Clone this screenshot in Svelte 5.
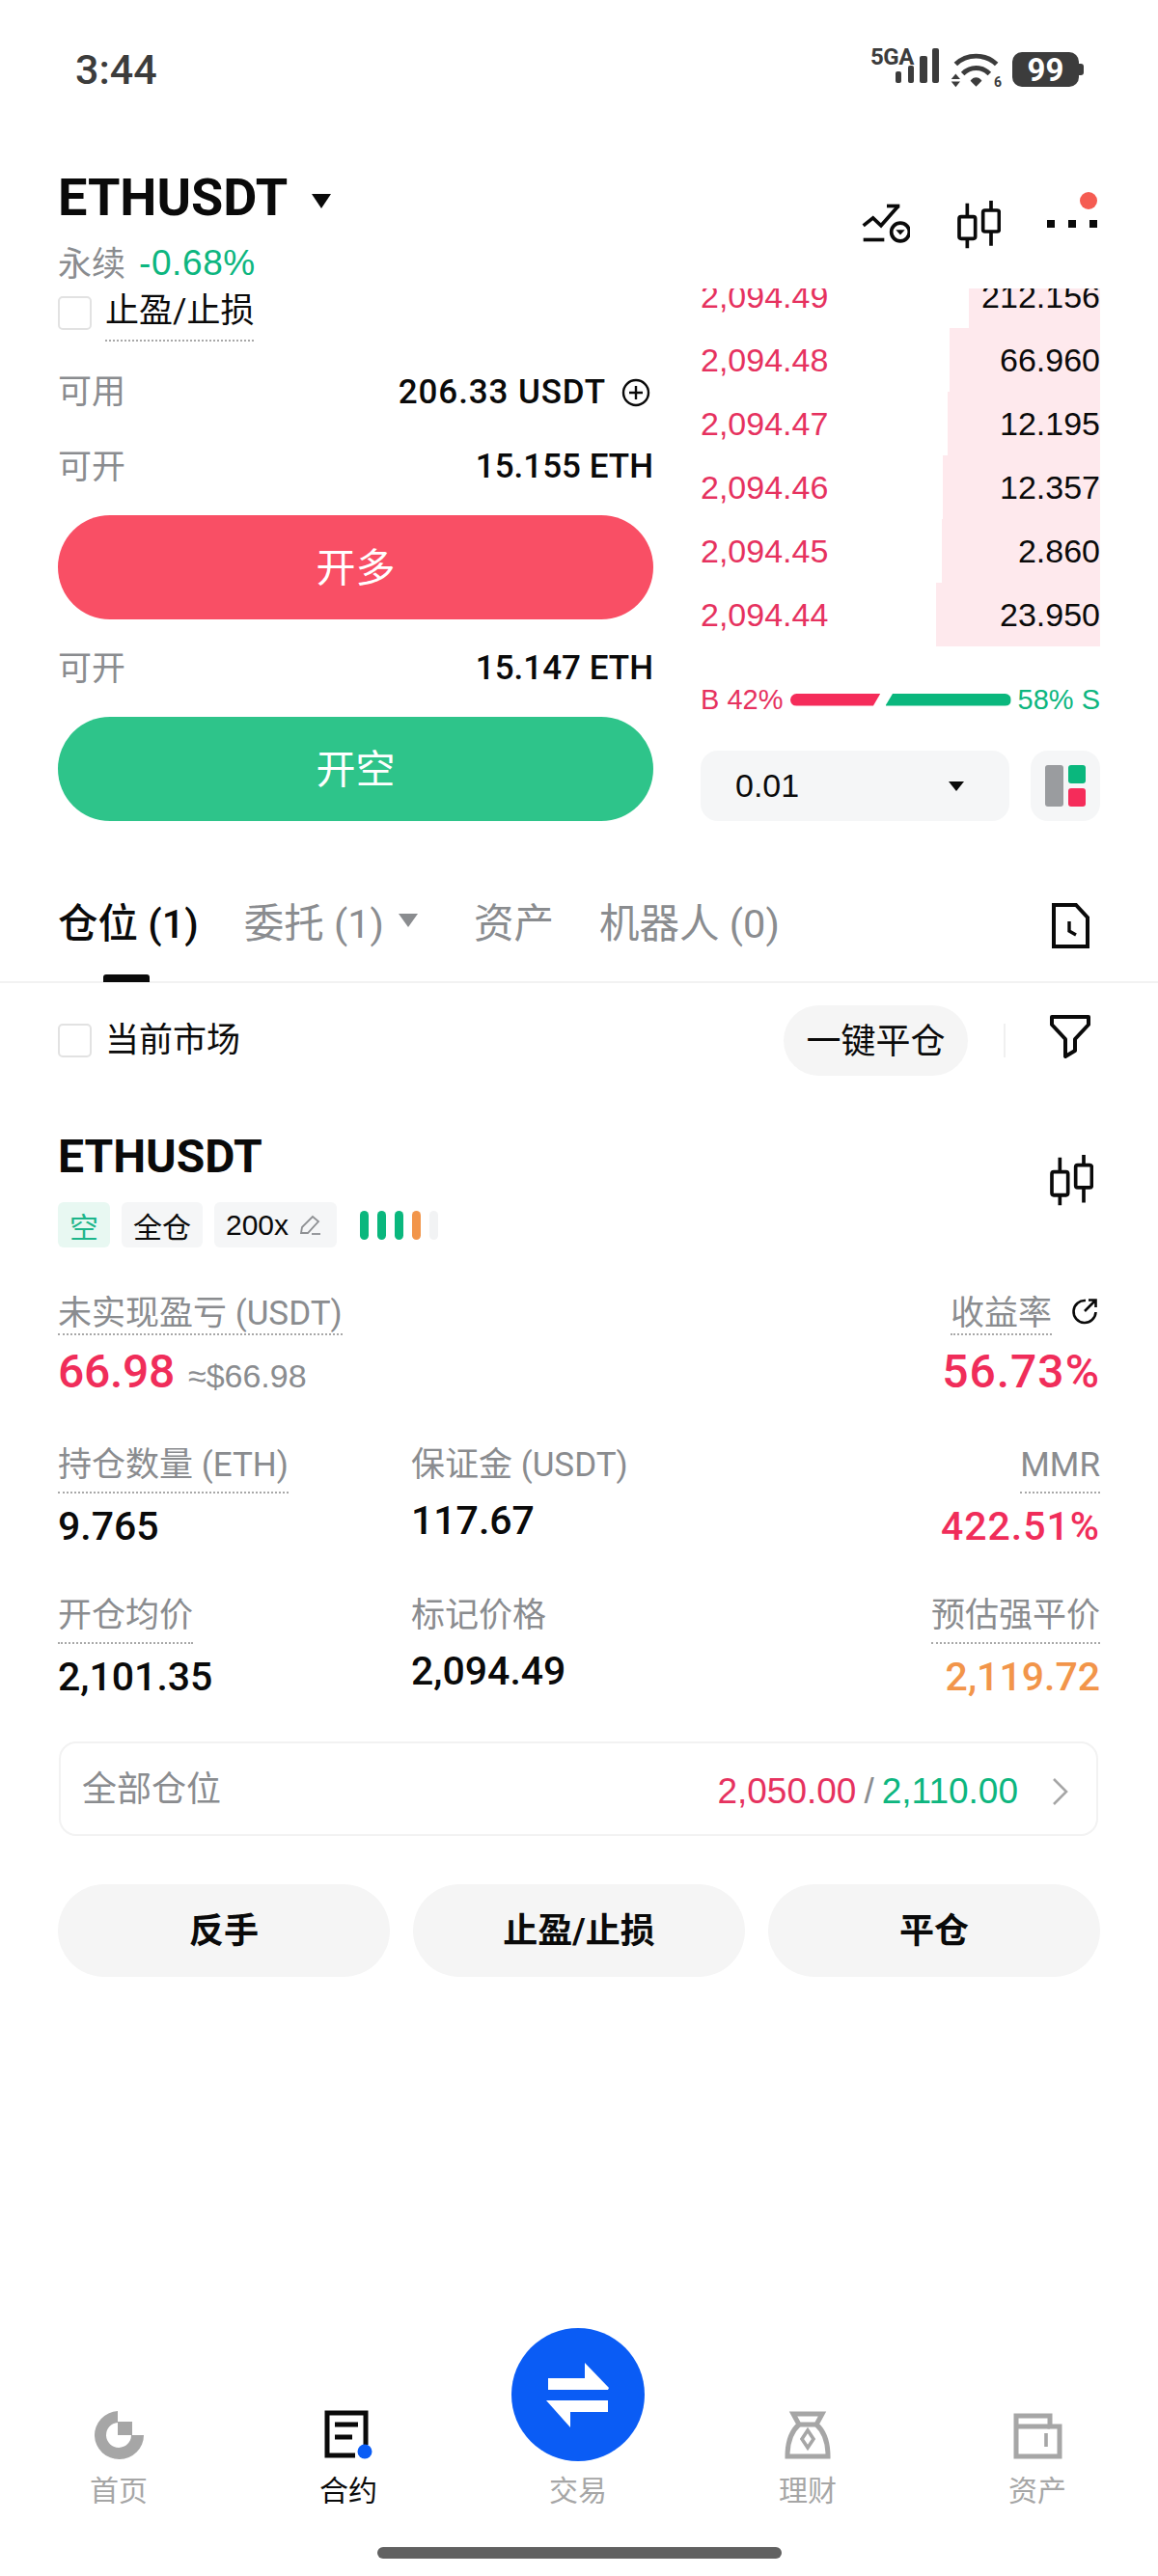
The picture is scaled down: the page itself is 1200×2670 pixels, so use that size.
<script>
	const book = [
		{ price: '2,094.49', qty: '212.156', width: 136 },
		{ price: '2,094.48', qty: '66.960', width: 156 },
		{ price: '2,094.47', qty: '12.195', width: 158 },
		{ price: '2,094.46', qty: '12.357', width: 163 },
		{ price: '2,094.45', qty: '2.860', width: 164 },
		{ price: '2,094.44', qty: '23.950', width: 170 }
	];
	const tabs = ['首页', '合约', '交易', '理财', '资产'];
</script>

<div class="page">
	<div class="status">
		<span class="time">3:44</span>
		<div class="status-icons">
			<div class="signal">
				<span class="net">5GA</span>
				<svg viewBox="0 0 70 40" width="70" height="40">
					<rect x="24" y="24" width="6" height="12" rx="2" />
					<rect x="37" y="18" width="6" height="18" rx="2" />
					<rect x="49" y="8" width="8" height="28" rx="2" />
					<rect x="62" y="0" width="7" height="36" rx="2" />
				</svg>
			</div>
			<div class="wifi">
				<svg viewBox="0 0 160 112" width="53" height="37">
					<path d="M16 38 C50 4 110 4 144 38" fill="none" stroke="#3c3c3c" stroke-width="15" />
					<path d="M38 68 C62 44 98 44 122 68" fill="none" stroke="#3c3c3c" stroke-width="15" />
					<path d="M62 90 C72 76 88 76 98 90 L80 108 Z" fill="#3c3c3c" />
					<path d="M2 85 L16 68 L30 85 Z M2 92 L30 92 L16 110 Z" fill="#3c3c3c" />
				</svg>
				<span class="wifi-six">6</span>
			</div>
			<div class="battery"><span>99</span></div>
		</div>
	</div>

	<div class="header">
		<div class="symbol">
			<div class="pair">
				<h1>ETHUSDT</h1>
				<span class="caret"></span>
			</div>
			<div class="sub"><span class="perp">永续</span><span class="green">-0.68%</span></div>
		</div>
		<div class="tools">
			<svg width="50" height="42" viewBox="0 0 150 125" fill="none" stroke="#0a0a0a" stroke-width="11">
				<path d="M5 68 L35 44 L60 68 L113 8" />
				<path d="M78 7 H118" />
				<path d="M5 112 H70" />
				<circle cx="120" cy="88" r="28" />
				<path d="M106 81 H134 L120 97 Z" fill="#0a0a0a" stroke="none" />
			</svg>
			<svg class="candle" width="45" height="50" viewBox="0 0 135 150" fill="none" stroke="#0a0a0a" stroke-width="11">
				<rect x="6" y="50" width="50" height="68" rx="6" />
				<path d="M31 8 V50 M31 118 V148" />
				<rect x="80" y="30" width="50" height="66" rx="6" />
				<path d="M105 0 V30 M105 96 V140" />
			</svg>
			<div class="more">
				<i></i><i></i><i></i>
				<b class="badge"></b>
			</div>
		</div>
	</div>

	<div class="trade">
		<div class="form">
			<div class="tp">
				<span class="check"></span>
				<span class="tp-label">止盈/止损</span>
			</div>
			<div class="line first">
				<span class="muted">可用</span>
				<span class="val avail">206.33 USDT
					<svg width="30" height="30" viewBox="0 0 30 30" fill="none" stroke="#0a0a0a" stroke-width="2.4">
						<circle cx="15" cy="15" r="13" />
						<path d="M8 15 H22 M15 8 V22" />
					</svg>
				</span>
			</div>
			<div class="line second">
				<span class="muted">可开</span>
				<span class="val">15.155 ETH</span>
			</div>
			<button class="cta long">开多</button>
			<div class="line third">
				<span class="muted">可开</span>
				<span class="val">15.147 ETH</span>
			</div>
			<button class="cta short">开空</button>
		</div>

		<div class="side">
			<div class="book">
				{#each book as row}
					<div class="book-row">
						<div class="depth" style="width: {row.width}px"></div>
						<span class="price">{row.price}</span>
						<span class="qty">{row.qty}</span>
					</div>
				{/each}
			</div>
			<div class="ratio">
				<span class="red">B 42%</span>
				<div class="ratio-bars">
					<div class="bar-buy"></div>
					<div class="bar-sell"></div>
				</div>
				<span class="green">58% S</span>
			</div>
			<div class="controls">
				<div class="select">
					<span>0.01</span>
					<span class="select-caret"></span>
				</div>
				<div class="layout-btn">
					<div class="lay-gray"></div>
					<div class="lay-col">
						<div class="lay-green"></div>
						<div class="lay-red"></div>
					</div>
				</div>
			</div>
		</div>
	</div>

	<div class="tabs">
		<div class="tab active">仓位 (1)<span class="underline"></span></div>
		<div class="tab">委托 (1)<span class="tab-caret"></span></div>
		<div class="tab">资产</div>
		<div class="tab">机器人 (0)</div>
		<svg class="doc" width="41" height="47" viewBox="0 0 41 47" fill="none" stroke="#0a0a0a" stroke-width="4">
			<path d="M3 2 H26 L38 15 V45 H3 Z" />
			<path d="M19 19 V29 L26 33" stroke-width="3.4" />
		</svg>
	</div>

	<div class="filter">
		<span class="check"></span>
		<span class="filter-label">当前市场</span>
		<button class="pill">一键平仓</button>
		<span class="divider"></span>
		<svg width="42" height="46" viewBox="0 0 42 46" fill="none" stroke="#0a0a0a" stroke-width="4" stroke-linejoin="round">
			<path d="M2 3 H40 V11 L26 26 V38 L16 44 V26 L2 11 Z" />
		</svg>
	</div>

	<div class="position">
		<div class="pos-head">
			<div>
				<h2>ETHUSDT</h2>
				<div class="tags">
					<span class="tag side-tag">空</span>
					<span class="tag">全仓</span>
					<span class="tag lever">200x
						<svg width="23" height="23" viewBox="0 0 23 23" fill="none" stroke="#8e9093" stroke-width="1.8">
							<path d="M2 20 L3 14 L14 3 L20 8 L9 20 Z" />
							<path d="M13 21 H22" />
						</svg>
					</span>
					<div class="ticks">
						<i></i><i></i><i></i><i class="warn"></i><i class="off"></i>
					</div>
				</div>
			</div>
			<svg class="pos-candle" width="45" height="53" viewBox="0 0 135 150" fill="none" stroke="#0a0a0a" stroke-width="11" preserveAspectRatio="none">
				<rect x="6" y="50" width="50" height="68" rx="6" />
				<path d="M31 8 V50 M31 118 V148" />
				<rect x="80" y="30" width="50" height="66" rx="6" />
				<path d="M105 0 V30 M105 96 V140" />
			</svg>
		</div>

		<div class="metrics">
			<div class="cell wide">
				<span class="label dotted tight">未实现盈亏 (USDT)</span>
				<div class="pnl"><span class="big red-strong">66.98</span><span class="approx">≈$66.98</span></div>
			</div>
			<div class="cell end">
				<div class="label-wrap">
					<span class="label dotted tight">收益率</span>
					<svg class="refresh" width="28" height="28" viewBox="0 0 28 28" fill="none" stroke="#0a0a0a" stroke-width="2.6">
						<path d="M15 3 A11.500 11.500 0 1 0 25.500 15" />
						<path d="M14 14 L25 3 M18 2.500 H25.500 V10" />
					</svg>
				</div>
				<div class="pnl"><span class="big pct red-strong">56.73%</span></div>
			</div>

			<div class="cell">
				<span class="label dotted">持仓数量 (ETH)</span>
				<span class="value">9.765</span>
			</div>
			<div class="cell">
				<span class="label">保证金 (USDT)</span>
				<span class="value plain">117.67</span>
			</div>
			<div class="cell end">
				<span class="label dotted">MMR</span>
				<span class="value pct red-strong">422.51%</span>
			</div>

			<div class="cell">
				<span class="label dotted">开仓均价</span>
				<span class="value">2,101.35</span>
			</div>
			<div class="cell">
				<span class="label">标记价格</span>
				<span class="value plain">2,094.49</span>
			</div>
			<div class="cell end">
				<span class="label dotted">预估强平价</span>
				<span class="value orange">2,119.72</span>
			</div>
		</div>

		<div class="card">
			<span class="muted">全部仓位</span>
			<div class="card-right">
				<span class="red">2,050.00</span>
				<span class="slash">/</span>
				<span class="green">2,110.00</span>
				<svg width="18" height="28" viewBox="0 0 18 28" fill="none" stroke="#a6a6a6" stroke-width="2.6">
					<path d="M2 1 L15 14 L2 27" />
				</svg>
			</div>
		</div>

		<div class="actions">
			<button>反手</button>
			<button>止盈/止损</button>
			<button>平仓</button>
		</div>
	</div>

	<nav class="nav">
		{#each tabs as tab, i}
			<div class="nav-item" class:current={i === 1}>
				{#if i === 0}
					<svg width="51" height="50" viewBox="0 0 51 50" fill="#a6a6a6">
						<path d="M24 0 V12 A13 13 0 1 0 38 25 H51 A25.500 25 0 1 1 24 0 Z" />
						<rect x="24" y="11" width="15" height="14" />
					</svg>
				{:else if i === 1}
					<svg width="50" height="51" viewBox="0 0 50 51" fill="none">
						<path d="M43 36 V3 H3 V47 H32" stroke="#0a0a0a" stroke-width="5" />
						<path d="M11 15 H35 M11 28 H29" stroke="#0a0a0a" stroke-width="5" />
						<circle cx="42" cy="43" r="7.500" fill="#0a5cf5" />
					</svg>
				{:else if i === 2}
					<svg class="swap" width="138" height="138" viewBox="0 0 138 138">
						<circle cx="69" cy="69" r="69" fill="#0a5cf5" />
						<path d="M76 36 L101 62 L100 64 H38 V52 H76 Z M36 75 H100 V87 H61 V103 Z" fill="#ffffff" />
					</svg>
				{:else if i === 3}
					<svg width="48" height="50" viewBox="0 0 48 50" fill="none" stroke="#a6a6a6" stroke-width="5">
						<path d="M9 3 H39 L33 14 H15 Z" />
						<path d="M15 14 C7 21 3 31 3 47 H45 C45 31 41 21 33 14" />
						<path d="M24 20 L30 29 L24 38 L18 29 Z" stroke-width="3.600" />
					</svg>
				{:else}
					<svg width="51" height="48" viewBox="0 0 51 48" fill="none" stroke="#a6a6a6" stroke-width="5">
						<path d="M3 3 H38 V14 H48 V45 H3 Z" />
						<path d="M3 14 H38" />
						<path d="M34 21 V35" stroke-width="3.600" />
					</svg>
				{/if}
				<span>{tab}</span>
			</div>
		{/each}
	</nav>
	<div class="home-bar"></div>
</div>

<style>
	:global(body) {
		background: #ffffff;
	}

	.page {
		--num: "Liberation Sans", "Noto Sans CJK SC", sans-serif;
		width: 1200px;
		height: 2670px;
		display: flex;
		flex-direction: column;
		overflow: hidden;
		color: #0a0a0a;
		font-family: Roboto, "Noto Sans CJK SC", sans-serif;
	}

	h1,
	h2 {
		margin: 0;
	}

	button {
		border: none;
		font-family: inherit;
		padding: 0;
	}

	.red {
		color: #e6325f;
	}

	.red-strong {
		color: #f02d5a;
	}

	.green {
		color: #0db67f;
	}

	.orange {
		color: #f2954a;
	}

	.muted {
		color: #8a8c8f;
	}

	/* status bar */
	.status {
		height: 104px;
		padding: 50px 78px 0 78px;
		box-sizing: border-box;
		display: flex;
		justify-content: space-between;
	}

	.time {
		font-size: 43px;
		line-height: 44px;
		font-weight: 500;
		color: #3c3c3c;
	}

	.status-icons {
		display: flex;
		align-items: flex-start;
		gap: 11px;
	}

	.signal {
		position: relative;
		width: 70px;
		height: 40px;
		fill: #3c3c3c;
	}

	.net {
		position: absolute;
		left: -2px;
		top: -3px;
		font-size: 24px;
		line-height: 24px;
		font-weight: 700;
		letter-spacing: -0.5px;
		color: #3c3c3c;
	}

	.wifi {
		position: relative;
		width: 53px;
		height: 37px;
		margin-top: 4px;
	}

	.wifi-six {
		position: absolute;
		right: 0;
		bottom: -1px;
		font-size: 14px;
		line-height: 14px;
		font-weight: 700;
		color: #3c3c3c;
	}

	.battery {
		position: relative;
		width: 69px;
		height: 36px;
		margin-top: 4px;
		margin-right: 4px;
		border-radius: 10px;
		background: #3c3c3c;
		color: #ffffff;
		display: flex;
		align-items: center;
		justify-content: center;
		font-size: 33px;
		font-weight: 700;
	}

	.battery::after {
		content: "";
		position: absolute;
		right: -5px;
		top: 12px;
		width: 5px;
		height: 12px;
		border-radius: 0 3px 3px 0;
		background: #3c3c3c;
	}

	/* header */
	.header {
		height: 195px;
		padding: 64px 60px 0 60px;
		box-sizing: border-box;
		display: flex;
		justify-content: space-between;
	}

	.pair {
		display: flex;
		align-items: center;
		height: 74px;
	}

	.pair h1 {
		font-size: 54px;
		font-weight: 700;
		line-height: 74px;
	}

	.caret {
		margin-left: 25px;
		margin-top: 7px;
		width: 0;
		height: 0;
		border-left: 10px solid transparent;
		border-right: 10px solid transparent;
		border-top: 15px solid #0a0a0a;
	}

	.sub {
		display: flex;
		align-items: center;
		height: 40px;
		margin-top: 11px;
		font-family: var(--num);
		font-size: 37px;
		letter-spacing: 0.6px;
	}

	.perp {
		font-size: 35px;
		color: #8a8c8f;
		margin-right: 14px;
		margin-bottom: 5px;
		letter-spacing: 0;
	}

	.tools {
		display: flex;
		align-items: flex-start;
		padding-top: 43px;
		margin-right: 3px;
	}

	.candle {
		margin-left: 49px;
		margin-top: -3px;
	}

	.more {
		position: relative;
		display: flex;
		gap: 14px;
		margin-left: 48px;
		margin-top: 17px;
	}

	.more i {
		width: 8px;
		height: 8px;
		background: #0a0a0a;
	}

	.badge {
		position: absolute;
		right: 0;
		top: -29px;
		width: 18px;
		height: 18px;
		border-radius: 50%;
		background: #f55c52;
	}

	/* trade area */
	.trade {
		display: flex;
		padding: 0 60px;
		gap: 49px;
	}

	.form {
		width: 617px;
	}

	.tp {
		display: flex;
		align-items: flex-start;
		padding-top: 8px;
		gap: 14px;
	}

	.check {
		display: block;
		width: 35px;
		height: 35px;
		box-sizing: border-box;
		border: 2px solid #e2e2e2;
		border-radius: 5px;
		flex-shrink: 0;
	}

	.tp-label {
		font-size: 35px;
		line-height: 32px;
		padding-bottom: 13px;
		border-bottom: 2px dotted #a8a8a8;
	}

	.line {
		display: flex;
		justify-content: space-between;
		align-items: center;
		height: 40px;
		font-size: 35px;
	}

	.line .muted {
		margin-bottom: 6px;
	}

	.line.first {
		margin-top: 31px;
	}

	.line.second {
		margin-top: 38px;
	}

	.line.third {
		margin-top: 30px;
	}

	.val {
		display: flex;
		align-items: center;
		gap: 16px;
		font-size: 35px;
		font-weight: 500;
		white-space: pre-line;
	}

	.val.avail {
		letter-spacing: 0.9px;
		margin-top: 3px;
	}

	.val svg {
		margin-right: 3px;
	}

	.cta {
		display: block;
		width: 100%;
		height: 108px;
		margin-top: 31px;
		padding-bottom: 6px;
		border-radius: 54px;
		color: #ffffff;
		font-size: 41px;
	}

	.long {
		background: #f94f65;
	}

	.short {
		background: #2ec48a;
	}

	.side {
		width: 414px;
	}

	.book {
		height: 371px;
		overflow: hidden;
		display: flex;
		flex-direction: column;
		justify-content: flex-end;
	}

	.book-row {
		position: relative;
		flex-shrink: 0;
		height: 66px;
		display: flex;
		align-items: center;
		justify-content: space-between;
		font-family: var(--num);
		font-size: 34px;
	}

	.depth {
		position: absolute;
		right: 0;
		top: 0;
		bottom: 0;
		background: #fee9ed;
	}

	.price {
		position: relative;
		color: #e6325f;
	}

	.qty {
		position: relative;
	}

	.ratio {
		display: flex;
		align-items: center;
		justify-content: space-between;
		height: 30px;
		margin-top: 40px;
		font-family: var(--num);
		font-size: 29px;
	}

	.ratio-bars {
		display: flex;
		gap: 5px;
		height: 13px;
	}

	.bar-buy {
		width: 94px;
		background: #f52c5a;
		border-radius: 7px 0 0 7px;
		clip-path: polygon(0 0, 100% 0, 92% 100%, 0 100%);
	}

	.bar-sell {
		width: 130px;
		background: #0ab77d;
		border-radius: 0 7px 7px 0;
		clip-path: polygon(6% 0, 100% 0, 100% 100%, 0 100%);
	}

	.controls {
		display: flex;
		justify-content: space-between;
		margin-top: 38px;
	}

	.select {
		width: 320px;
		height: 73px;
		padding: 0 47px 0 36px;
		box-sizing: border-box;
		border-radius: 18px;
		background: #f5f6f7;
		display: flex;
		align-items: center;
		justify-content: space-between;
		font-family: var(--num);
		font-size: 34px;
	}

	.select-caret {
		width: 0;
		height: 0;
		border-left: 8px solid transparent;
		border-right: 8px solid transparent;
		border-top: 10px solid #0a0a0a;
	}

	.layout-btn {
		width: 72px;
		height: 73px;
		border-radius: 18px;
		background: #f5f6f7;
		display: flex;
		align-items: center;
		justify-content: center;
		gap: 5px;
	}

	.lay-gray {
		width: 19px;
		height: 43px;
		border-radius: 3px;
		background: #9a9c9f;
	}

	.lay-col {
		display: flex;
		flex-direction: column;
		gap: 5px;
	}

	.lay-green,
	.lay-red {
		width: 18px;
		height: 19px;
		border-radius: 3px;
	}

	.lay-green {
		background: #0ab77d;
	}

	.lay-red {
		background: #f52c5a;
	}

	/* tabs */
	.tabs {
		height: 168px;
		padding: 87px 70px 0 60px;
		box-sizing: border-box;
		border-bottom: 2px solid #f2f2f2;
		display: flex;
		align-items: flex-start;
		gap: 47px;
	}

	.tab {
		position: relative;
		display: flex;
		align-items: center;
		height: 40px;
		white-space: pre;
		font-size: 41.5px;
		line-height: 40px;
		color: #8a8c8f;
	}

	.tab.active {
		color: #0a0a0a;
		font-weight: 500;
	}

	.tab-caret {
		margin-left: 15px;
		margin-right: 11px;
		margin-top: -8px;
		width: 0;
		height: 0;
		border-left: 10px solid transparent;
		border-right: 10px solid transparent;
		border-top: 14px solid #8a8c8f;
	}

	.underline {
		position: absolute;
		left: 47px;
		top: 72px;
		width: 48px;
		height: 8px;
		border-radius: 3px 3px 0 0;
		background: #0a0a0a;
	}

	.doc {
		margin-left: auto;
		margin-top: -2px;
	}

	.filter {
		display: flex;
		align-items: center;
		height: 73px;
		margin-top: 23px;
		padding: 0 70px 0 60px;
	}

	.filter-label {
		margin-left: 14px;
		margin-bottom: 8px;
		font-size: 35px;
	}

	.pill {
		margin-left: auto;
		width: 191px;
		height: 73px;
		padding-bottom: 6px;
		border-radius: 37px;
		background: #f5f5f5;
		color: #0a0a0a;
		font-size: 36px;
	}

	.divider {
		width: 2px;
		height: 35px;
		margin: 0 46px 0 37px;
		background: #f0f0f0;
	}

	.filter svg {
		margin-top: -10px;
	}

	/* position */
	.position {
		padding: 56px 60px 0 60px;
	}

	.pos-head {
		display: flex;
		justify-content: space-between;
		align-items: flex-start;
	}

	.pos-head h2 {
		font-size: 48px;
		line-height: 56px;
		font-weight: 700;
	}

	.pos-candle {
		margin-top: 26px;
		margin-right: 7px;
	}

	.tags {
		display: flex;
		align-items: center;
		gap: 12px;
		margin-top: 19px;
	}

	.tag {
		display: flex;
		align-items: center;
		gap: 11px;
		height: 47px;
		padding: 0 12px;
		border-radius: 6px;
		background: #f5f6f7;
		font-size: 30px;
		white-space: pre-line;
	}

	.tag.lever {
		padding-right: 16px;
		font-family: var(--num);
	}

	.side-tag {
		background: #e8f8f2;
		color: #1db58a;
	}

	.ticks {
		display: flex;
		gap: 9px;
		margin-left: 12px;
	}

	.ticks i {
		width: 9px;
		height: 30px;
		border-radius: 5px;
		background: #0ab77d;
	}

	.ticks .warn {
		background: #f2954a;
	}

	.ticks .off {
		background: #f2f3f4;
	}

	.metrics {
		display: grid;
		grid-template-columns: 366px 1fr auto;
		grid-template-rows: 157px 156px 153px;
		margin-top: 46px;
	}

	.cell {
		display: flex;
		flex-direction: column;
		align-items: flex-start;
	}

	.cell.wide {
		grid-column: span 2;
	}

	.cell.end {
		align-items: flex-end;
	}

	.label {
		padding-top: 3px;
		font-size: 35px;
		line-height: 40px;
		color: #8a8c8f;
	}

	.label.dotted {
		padding-bottom: 7px;
		border-bottom: 2px dotted #a8a8a8;
	}

	.label.tight {
		padding-bottom: 0;
	}

	.label-wrap {
		display: flex;
		align-items: flex-start;
		gap: 20px;
		margin-right: 2px;
	}

	.refresh {
		margin-top: 6px;
	}

	.pnl {
		display: flex;
		align-items: baseline;
		gap: 14px;
		margin-top: 10px;
		line-height: 56px;
	}

	.big {
		font-size: 48px;
		font-weight: 500;
		letter-spacing: -0.3px;
	}

	.big.pct {
		letter-spacing: 1px;
	}

	.approx {
		font-family: var(--num);
		font-size: 34px;
		color: #8a8c8f;
	}

	.value {
		margin-top: 12px;
		font-size: 41px;
		line-height: 44px;
		font-weight: 500;
	}

	.value.pct {
		letter-spacing: 1px;
	}

	.value.plain {
		margin-top: 15px;
	}

	.card {
		height: 98px;
		box-sizing: border-box;
		margin: 0 2px 0 1px;
		padding: 0 28px 0 22px;
		border: 2px solid #f2f2f2;
		border-radius: 18px;
		display: flex;
		align-items: center;
		justify-content: space-between;
		font-size: 36px;
	}

	.card .muted {
		margin-bottom: 6px;
	}

	.card-right {
		display: flex;
		align-items: center;
		gap: 8px;
		padding-top: 5px;
		font-family: var(--num);
		font-size: 37px;
	}

	.card-right .slash {
		color: #8a8c8f;
	}

	.card-right svg {
		margin-left: 27px;
	}

	.actions {
		display: flex;
		gap: 24px;
		margin-top: 50px;
	}

	.actions button {
		flex: 1;
		height: 96px;
		padding-bottom: 7px;
		border-radius: 48px;
		background: #f5f5f5;
		color: #0a0a0a;
		font-size: 36px;
		font-weight: 700;
	}

	/* bottom nav */
	.nav {
		display: grid;
		grid-template-columns: repeat(5, 238px);
		align-items: end;
		margin-top: auto;
		padding-left: 4px;
	}

	.nav-item {
		display: flex;
		flex-direction: column;
		align-items: center;
		font-size: 30px;
		line-height: 36px;
		color: #a6a6a6;
	}

	.nav-item span {
		position: relative;
		top: 2px;
	}

	.nav-item.current {
		color: #0a0a0a;
	}

	.nav-item svg {
		margin-bottom: 13px;
	}

	.nav-item .swap {
		margin-bottom: 11px;
	}

	.home-bar {
		width: 419px;
		height: 12px;
		margin: 42px auto 18px auto;
		border-radius: 6px;
		background: #616161;
	}
</style>
